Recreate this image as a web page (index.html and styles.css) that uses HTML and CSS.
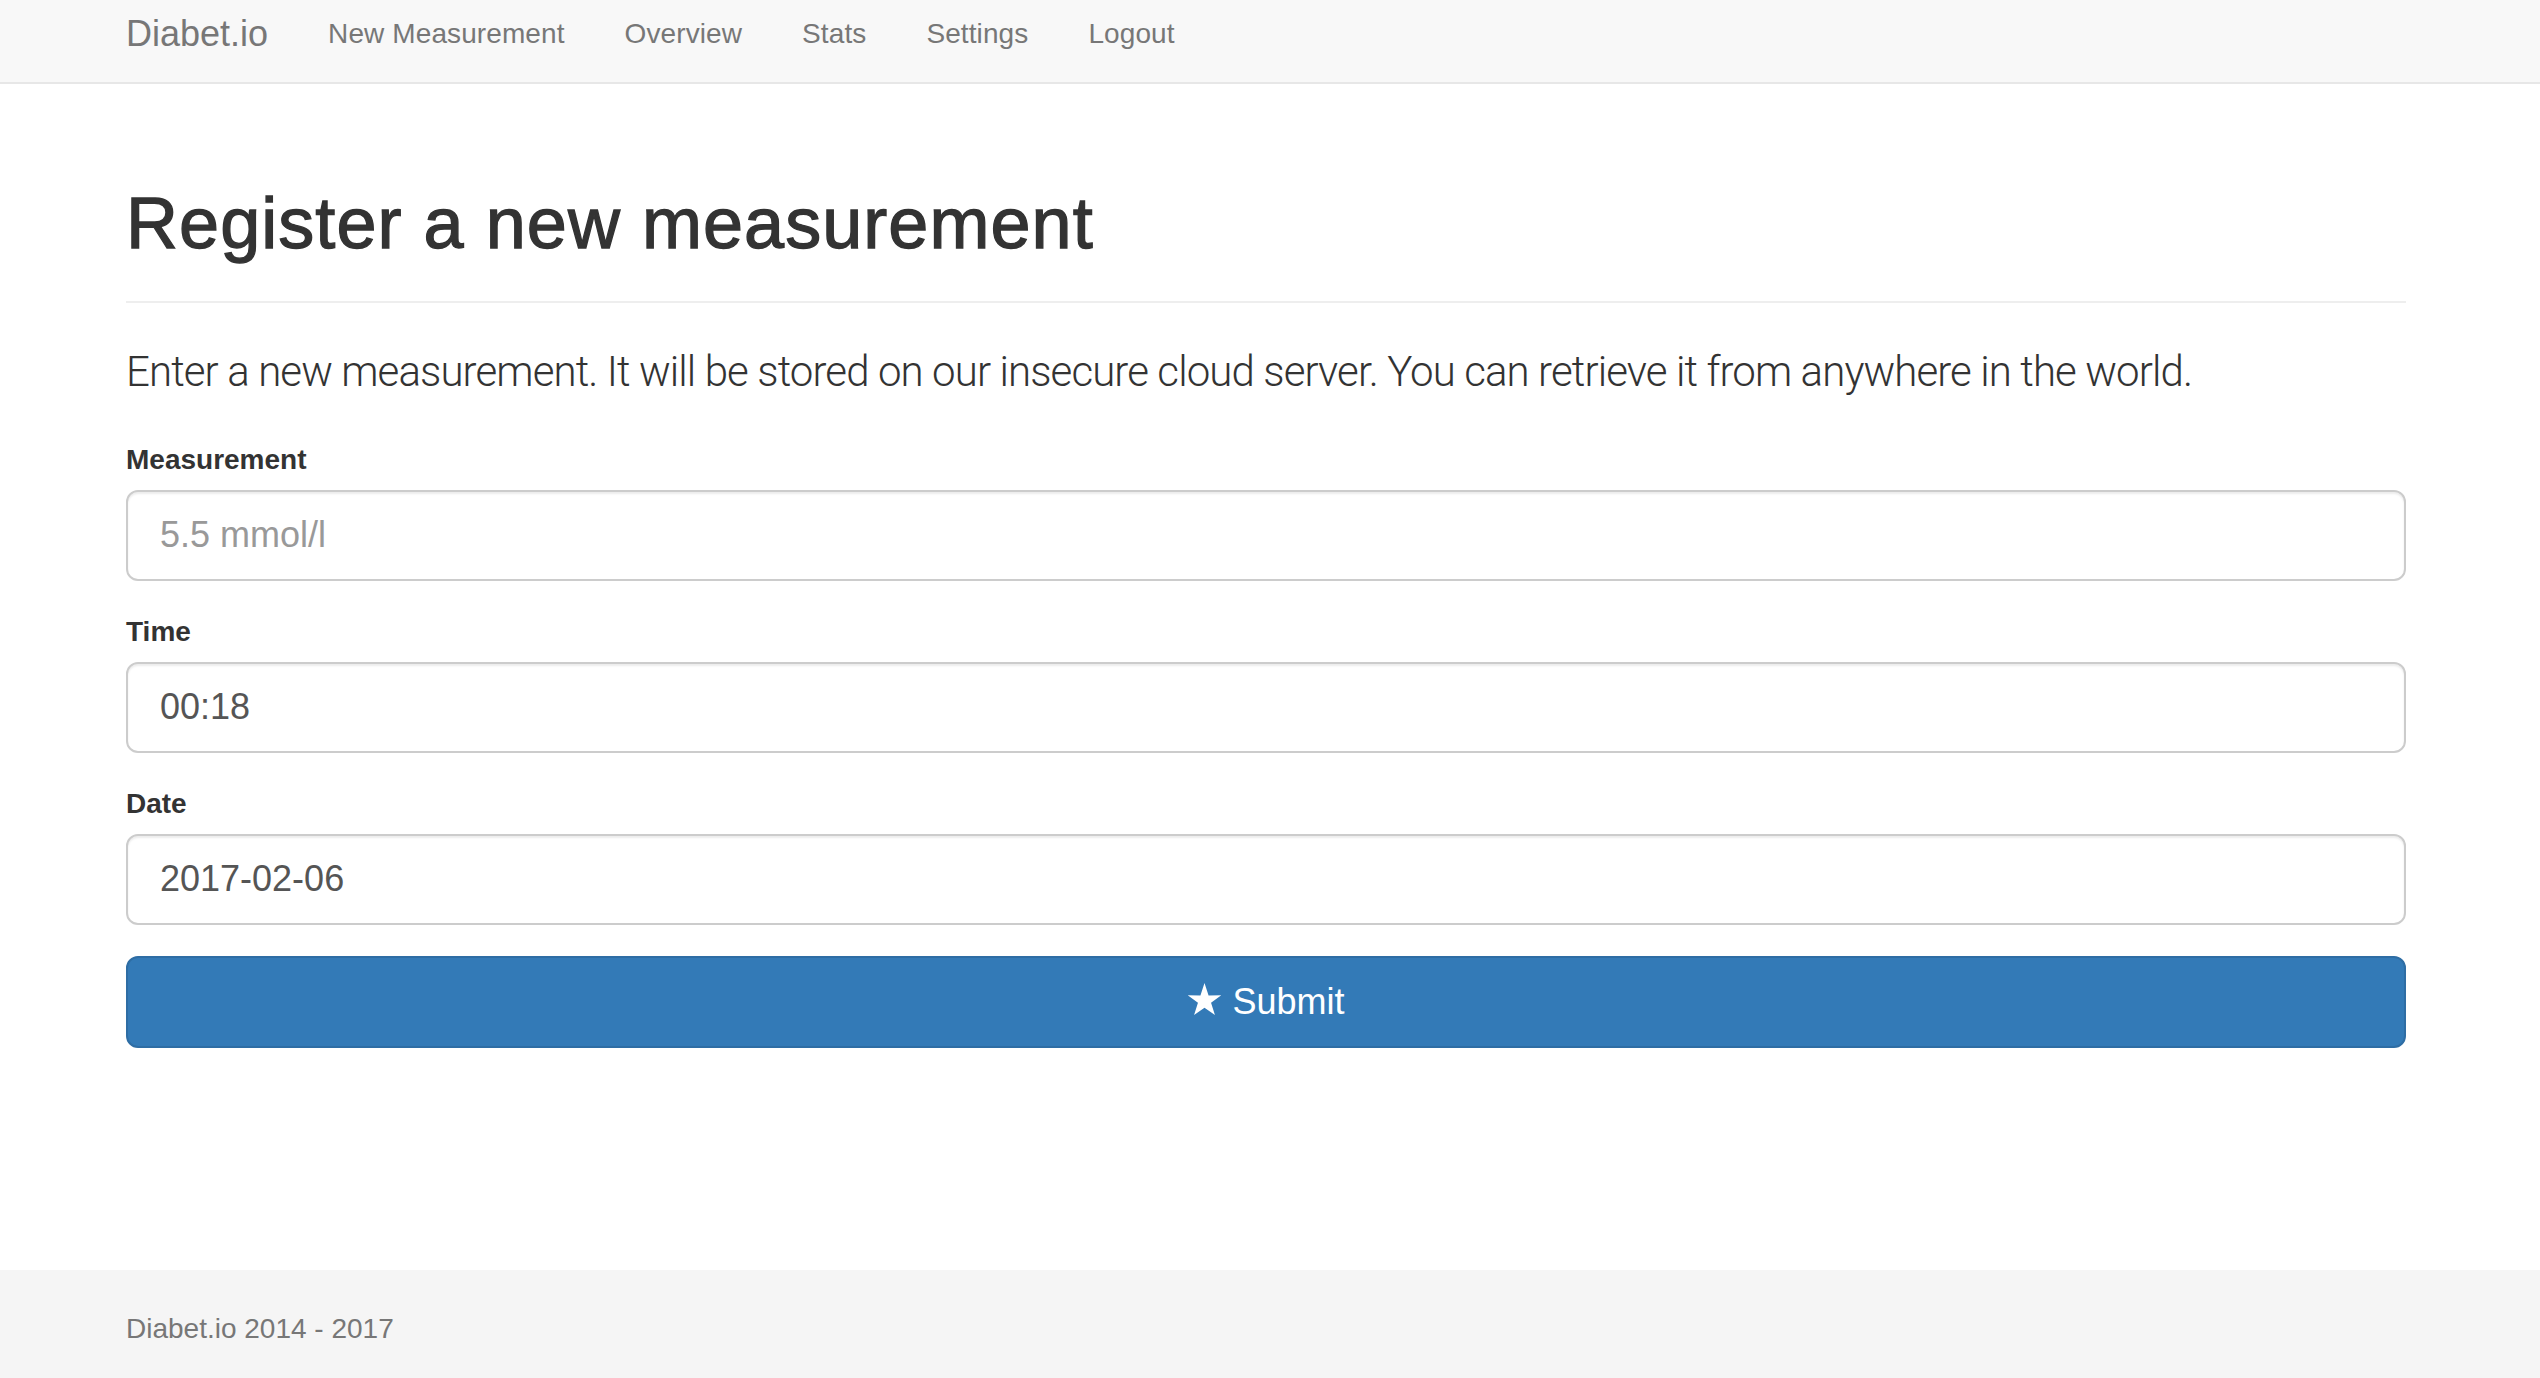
FILE: index.html
```html
<!DOCTYPE html>
<html lang="en">
<head>
<meta charset="utf-8">
<title>Diabet.io - New Measurement</title>
<link rel="stylesheet" href="styles.css">
</head>
<body>
<nav class="navbar">
  <div class="container navbar-inner">
    <a class="brand" href="#">Diabet.io</a>
    <ul class="nav">
      <li><a href="#">New Measurement</a></li>
      <li><a href="#">Overview</a></li>
      <li><a href="#">Stats</a></li>
      <li><a href="#">Settings</a></li>
      <li><a href="#">Logout</a></li>
    </ul>
  </div>
</nav>
<main class="container main">
  <div class="page-header">
    <h1>Register a new measurement</h1>
  </div>
  <p class="lead">Enter a new measurement. It will be stored on our insecure cloud server. You can retrieve it from anywhere in the world.</p>
  <form class="form">
    <div class="form-group">
      <label for="m">Measurement</label>
      <input id="m" class="form-control" type="text" placeholder="5.5 mmol/l">
    </div>
    <div class="form-group">
      <label for="t">Time</label>
      <input id="t" class="form-control" type="text" value="00:18">
    </div>
    <div class="form-group">
      <label for="d">Date</label>
      <input id="d" class="form-control" type="text" value="2017-02-06">
    </div>
    <button type="button" class="btn-submit"><svg class="star" viewBox="-95 -100 190 181" aria-hidden="true"><polygon points="0,-100 23,-30 95,-31 37,12 59,81 0,40 -59,81 -37,12 -95,-31 -23,-30" fill="#fff"/></svg> Submit</button>
  </form>
</main>
<footer class="footer">
  <div class="container">
    <p class="footer-text">Diabet.io 2014 - 2017</p>
  </div>
</footer>
</body>
</html>
```
FILE: styles.css
```css
* { box-sizing: border-box; }
html, body { margin: 0; padding: 0; }
body {
  font-family: "Liberation Sans", Arial, Helvetica, sans-serif;
  font-size: 28px;
  line-height: 40px;
  color: #333;
  background: #fff;
  min-height: 100vh;
  display: flex;
  flex-direction: column;
}
.container {
  width: 2280px;
  margin-left: 126px;
}
.navbar {
  height: 84px;
  background: #f8f8f8;
  border-bottom: 2px solid #e7e7e7;
}
.navbar-inner {
  display: flex;
  align-items: center;
  height: 68px;
}
.brand {
  font-size: 36px;
  line-height: 40px;
  color: #777;
  text-decoration: none;
  margin-right: 30px;
}
.nav {
  display: flex;
  list-style: none;
  margin: 0;
  padding: 0;
}
.nav a {
  display: block;
  padding: 0 30px;
  color: #777;
  text-decoration: none;
  font-size: 28px;
  line-height: 40px;
  letter-spacing: 0.1px;
}
.main {
  padding-top: 100px;
}
.page-header {
  padding-bottom: 18px;
  border-bottom: 2px solid #eee;
  margin-bottom: 40px;
}
h1 {
  margin: 0 0 20px;
  font-size: 72px;
  line-height: 1.1;
  font-weight: 400;
  letter-spacing: 1.05px;
  -webkit-text-stroke: 1.3px #333;
  color: #333;
}
.lead {
  margin: 0 0 38px;
  font-family: Roboto, "Liberation Sans", Arial, sans-serif;
  font-size: 42px;
  line-height: 1.4;
  font-weight: 300;
  letter-spacing: -0.9px;
  color: #333;
}
.form-group {
  margin-bottom: 31px;
}
label {
  display: block;
  font-weight: 700;
  margin-bottom: 10px;
  line-height: 40px;
}
.form-control {
  display: block;
  width: 100%;
  height: 91px;
  padding: 0 32px;
  font-family: inherit;
  font-size: 36px;
  color: #555;
  background: #fff;
  border: 2px solid #ccc;
  border-radius: 12px;
  box-shadow: inset 0 2px 2px rgba(0,0,0,.075);
  outline: none;
}
.form-control::placeholder { color: #999; }
.btn-submit {
  display: block;
  width: 100%;
  height: 92px;
  font-family: inherit;
  font-size: 36px;
  line-height: 40px;
  color: #fff;
  background: #337ab7;
  border: 2px solid #2e6da4;
  border-radius: 12px;
  cursor: pointer;
  text-align: center;
}
.star {
  width: 35px;
  height: 32px;
  vertical-align: -1px;
}
.footer {
  margin-top: auto;
  height: 108px;
  background: #f5f5f5;
  padding-top: 39px;
}
.footer-text {
  margin: 0;
  color: #777;
  font-size: 28px;
  line-height: 40px;
}
```
